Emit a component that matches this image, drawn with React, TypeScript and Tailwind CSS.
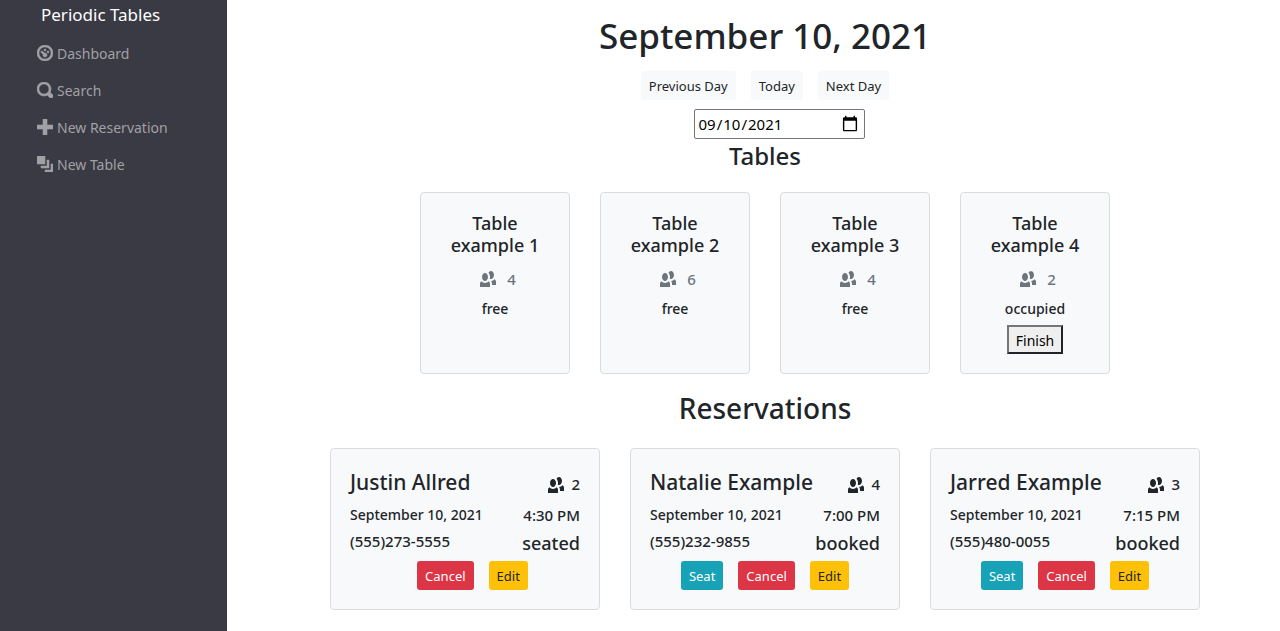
import { useState } from "react";

const icons = {
  dashboard:
    "M4 0c-2.2 0-4 1.8-4 4s1.8 4 4 4 4-1.8 4-4-1.8-4-4-4zm0 1c1.66 0 3 1.34 3 3s-1.34 3-3 3-3-1.34-3-3 1.34-3 3-3zm0 1c-.28 0-.5.22-.5.5s.22.5.5.5.5-.22.5-.5-.22-.5-.5-.5zm-1.66 1a.5.5 0 0 0-.19.84l.91.91c-.02.08-.06.16-.06.25 0 .55.45 1 1 1s1-.45 1-1-.45-1-1-1c-.09 0-.17.04-.25.06l-.91-.91a.5.5 0 0 0-.44-.16.5.5 0 0 0-.06 0zm3.16 0c-.28 0-.5.22-.5.5s.22.5.5.5.5-.22.5-.5-.22-.5-.5-.5z",
  search:
    "M3.5 0c-1.93 0-3.5 1.57-3.5 3.5s1.57 3.5 3.5 3.5c.59 0 1.17-.14 1.66-.41a1 1 0 0 0 .13.13l1 1a1.02 1.02 0 1 0 1.44-1.44l-1-1a1 1 0 0 0-.16-.13c.27-.49.44-1.06.44-1.66 0-1.93-1.55-3.5-3.5-3.5zm0 1c1.39 0 2.5 1.1 2.5 2.5 0 .66-.24 1.27-.66 1.72-.01.01-.02.02-.03.03a1 1 0 0 0-.13.13c-.44.4-1.04.63-1.69.63-1.39 0-2.5-1.1-2.5-2.5s1.11-2.5 2.5-2.5z",
  plus: "M3 0v3h-3v2h3v3h2v-3h3v-2h-3v-3h-2z",
  layers: "M0 0v4h4v-4h-4zm5 2v3h-3v1h4v-4h-1zm2 2v3h-3v1h4v-4h-1z",
  people:
    "M5.5 0c-.51 0-.95.35-1.22.88.45.54.72 1.28.72 2.13 0 .29-.03.55-.09.81.19.11.38.19.59.19.83 0 1.5-.9 1.5-2s-.67-2-1.5-2zm-3 1c-.83 0-1.5.9-1.5 2s.67 2 1.5 2 1.5-.9 1.5-2-.67-2-1.5-2zm4.75 3.16c-.43.51-1.02.82-1.69.84.27.38.44.84.44 1.34v.66h2v-1.66c0-.52-.31-.97-.75-1.19zm-6.5 1c-.44.22-.75.67-.75 1.19v1.66h5v-1.66c0-.52-.31-.97-.75-1.19-.45.53-1.06.84-1.75.84s-1.3-.32-1.75-.84z",
};

function Icon({ name, stroke = 0 }: { name: keyof typeof icons; stroke?: number }) {
  return (
    <svg
      viewBox="0 0 8 8"
      className="size-4 shrink-0"
      fill="currentColor"
      stroke="currentColor"
      strokeWidth={stroke}
      aria-hidden="true"
    >
      <path d={icons[name]} />
    </svg>
  );
}

const links: { label: string; icon: keyof typeof icons }[] = [
  { label: "Dashboard", icon: "dashboard" },
  { label: "Search", icon: "search" },
  { label: "New Reservation", icon: "plus" },
  { label: "New Table", icon: "layers" },
];

const tables = [
  { name: "Table example 1", capacity: 4, status: "free" },
  { name: "Table example 2", capacity: 6, status: "free" },
  { name: "Table example 3", capacity: 4, status: "free" },
  { name: "Table example 4", capacity: 2, status: "occupied" },
];

const reservations = [
  { name: "Justin Allred", people: 2, time: "4:30 PM", phone: "(555)273-5555", status: "seated" },
  { name: "Natalie Example", people: 4, time: "7:00 PM", phone: "(555)232-9855", status: "booked" },
  { name: "Jarred Example", people: 3, time: "7:15 PM", phone: "(555)480-0055", status: "booked" },
];

const smallButton = "h-[29px] rounded-[3px] px-2 pt-[2px] text-[13px]";

export default function App() {
  const [date, setDate] = useState("2021-09-10");

  return (
    <div className="flex min-h-screen bg-white font-['Noto_Sans','Open_Sans',sans-serif] text-[15px] text-[#212529]">
      <aside className="w-[227px] shrink-0 bg-[#3a3a44]">
        <a href="#" className="block pt-[3px] pl-[41px] text-[17px] leading-6 text-white">
          Periodic Tables
        </a>
        <nav className="mt-[7px] flex flex-col pl-[37px] text-sm">
          {links.map((link) => (
            <a key={link.label} href="#" className="flex h-[37px] items-center gap-1 text-[#a0a0a5]">
              <Icon name={link.icon} stroke={0.3} />
              <span className="pt-[2px]">{link.label}</span>
            </a>
          ))}
        </nav>
      </aside>

      <main className="flex min-w-0 grow flex-col items-center pl-[23px] text-center">
        <h1 className="mt-3 text-[35px] leading-12 font-medium">September 10, 2021</h1>
        <div className="mt-[11px] flex gap-[15px]">
          {["Previous Day", "Today", "Next Day"].map((label) => (
            <button key={label} type="button" className={`${smallButton} bg-[#f8f9fa]`}>
              {label}
            </button>
          ))}
        </div>
        <div className="mt-[9px] pl-7">
          <input
            type="date"
            aria-label="Date"
            value={date}
            onChange={(e) => setDate(e.target.value)}
            className="h-[30px] w-[171px] rounded-[2px] border border-[#767676] px-[3px] text-black [&::-webkit-calendar-picker-indicator]:size-[18px]"
          />
        </div>
        <h2 className="text-2xl leading-[34px] font-medium">Tables</h2>

        <section className="mt-[19px] flex flex-wrap justify-center gap-[30px]">
          {tables.map((table) => (
            <article
              key={table.name}
              className="flex min-h-[182px] w-[150px] flex-col items-center rounded border border-[#d9dcdf] bg-[#f8f9fa] px-[19px] pt-[19px] pb-[18px] font-medium"
            >
              <h3 className="text-lg leading-[22px]">{table.name}</h3>
              <p className="mt-2 flex items-center gap-[11px] pl-[6px] leading-[30px] text-[#6c757d]">
                <Icon name="people" />
                {table.capacity}
              </p>
              <p className="text-sm leading-[30px]">{table.status}</p>
              {table.status === "occupied" && (
                <button
                  type="button"
                  className="mt-px h-[29px] border-2 border-t-[#767676] border-r-[#212529] border-b-[#212529] border-l-[#767676] bg-[#efefef] px-[7px] pt-[2px] text-sm leading-5 font-normal text-black"
                >
                  Finish
                </button>
              )}
            </article>
          ))}
        </section>

        <h2 className="mt-[14px] text-[28px] leading-10 font-medium">Reservations</h2>

        <section className="mt-5 flex flex-wrap justify-center gap-[30px]">
          {reservations.map((item) => (
            <article
              key={item.name}
              className="min-h-[162px] w-[270px] rounded border border-[#d9dcdf] bg-[#f8f9fa] px-[19px] pt-[19px] pb-[18px] font-medium"
            >
              <div className="flex items-center justify-between">
                <h3 className="text-[21px] leading-7">{item.name}</h3>
                <p className="flex items-center gap-[7px] pt-[5px]">
                  <Icon name="people" />
                  {item.people}
                </p>
              </div>
              <div className="mt-[6px] flex justify-between leading-[26px]">
                <p className="text-sm leading-[26px]">September 10, 2021</p>
                <p>{item.time}</p>
              </div>
              <div className="flex justify-between leading-[26px]">
                <p>{item.phone}</p>
                <p className="pt-[3px] text-lg leading-6">{item.status}</p>
              </div>
              <div className="mt-[6px] flex justify-center font-normal">
                {item.status === "booked" && (
                  <button type="button" className={`${smallButton} bg-[#17a2b8] text-white`}>
                    Seat
                  </button>
                )}
                <button type="button" className={`${smallButton} mx-[15px] bg-[#dc3545] text-white`}>
                  Cancel
                </button>
                <button type="button" className={`${smallButton} bg-[#ffc107]`}>
                  Edit
                </button>
              </div>
            </article>
          ))}
        </section>
      </main>
    </div>
  );
}
